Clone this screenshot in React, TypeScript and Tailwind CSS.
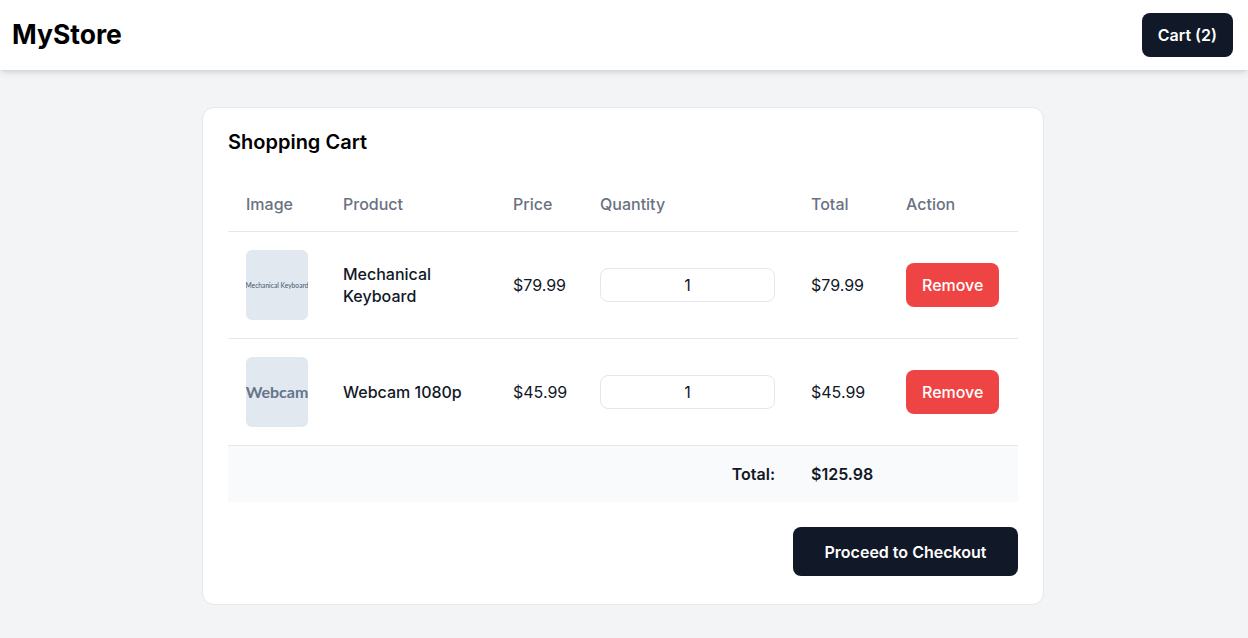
const items = [
  { id: 1, name: "Mechanical Keyboard", price: 79.99, qty: 1, thumb: "Mechanical Keyboard", small: true },
  { id: 2, name: "Webcam 1080p", price: 45.99, qty: 1, thumb: "Webcam", small: false },
];

const Thumb = ({ label, small }: { label: string; small: boolean }) => (
  <div className="flex h-[70px] w-[62px] items-center justify-center overflow-hidden rounded-md bg-[#e2e8f0]">
    <span
      className={
        small
          ? "whitespace-nowrap font-['Lato',sans-serif] text-[6.7px] text-[#475569]"
          : "whitespace-nowrap font-['Lato',sans-serif] text-[16px] font-bold text-[#64748b]"
      }
    >
      {label}
    </span>
  </div>
);

export default function App() {
  const total = items.reduce((s, i) => s + i.price * i.qty, 0);

  return (
    <div className="min-h-screen bg-[#f3f4f6] font-['Inter',sans-serif] text-[#111827]">
      <header className="flex items-center justify-between bg-white py-[13px] pl-3 pr-[15px] shadow-md">
        <h1 className="text-[26.5px] font-bold text-black">MyStore</h1>
        <button className="rounded-lg bg-[#111827] px-4 py-2.5 text-base font-semibold leading-6 text-white">
          Cart (2)
        </button>
      </header>

      <main className="flex pt-[37px] pb-8 pl-[202px]">
        <div className="w-[842px] rounded-xl border border-gray-200 bg-white px-[25px] pt-5 pb-[28px]">
          <h2 className="text-xl font-semibold text-black">Shopping Cart</h2>

          <table className="mt-[21px] w-full table-fixed border-collapse text-left">
            <colgroup>
              <col className="w-[97px]" />
              <col className="w-[170px]" />
              <col className="w-[87px]" />
              <col className="w-[211px]" />
              <col className="w-[95px]" />
              <col className="w-[130px]" />
            </colgroup>
            <thead>
              <tr className="border-b border-gray-200 text-base font-medium text-gray-500">
                <th className="px-[18px] py-[15px] font-medium">Image</th>
                <th className="px-[18px] py-[15px] font-medium">Product</th>
                <th className="px-[18px] py-[15px] font-medium">Price</th>
                <th className="px-[18px] py-[15px] font-medium">Quantity</th>
                <th className="px-[18px] py-[15px] font-medium">Total</th>
                <th className="px-[18px] py-[15px] font-medium">Action</th>
              </tr>
            </thead>
            <tbody>
              {items.map((item) => (
                <tr key={item.id} className="border-b border-gray-200">
                  <td className="px-[18px] py-[18px]">
                    <Thumb label={item.thumb} small={item.small} />
                  </td>
                  <td className="px-[18px] py-[18px] text-base font-medium leading-[22px]">{item.name}</td>
                  <td className="px-[18px] py-[18px]">${item.price.toFixed(2)}</td>
                  <td className="px-[18px] py-[18px]">
                    <input
                      type="number"
                      defaultValue={item.qty}
                      className="h-[34px] w-full rounded-lg border border-gray-200 text-center text-base outline-none [appearance:textfield] [&::-webkit-inner-spin-button]:appearance-none"
                    />
                  </td>
                  <td className="px-[18px] py-[18px]">${(item.price * item.qty).toFixed(2)}</td>
                  <td className="px-[18px] py-[18px]">
                    <button className="h-[44px] rounded-lg bg-[#ef4444] px-4 text-base font-medium text-white">
                      Remove
                    </button>
                  </td>
                </tr>
              ))}
              <tr className="bg-[#f9fafb] font-semibold">
                <td colSpan={4} className="px-[18px] py-4 text-right">
                  Total:
                </td>
                <td className="px-[18px] py-4">${total.toFixed(2)}</td>
                <td />
              </tr>
            </tbody>
          </table>

          <div className="mt-[25px] flex justify-end">
            <button className="h-[49px] w-[225px] rounded-lg bg-[#111827] text-base font-semibold text-white">
              Proceed to Checkout
            </button>
          </div>
        </div>
      </main>
    </div>
  );
}
